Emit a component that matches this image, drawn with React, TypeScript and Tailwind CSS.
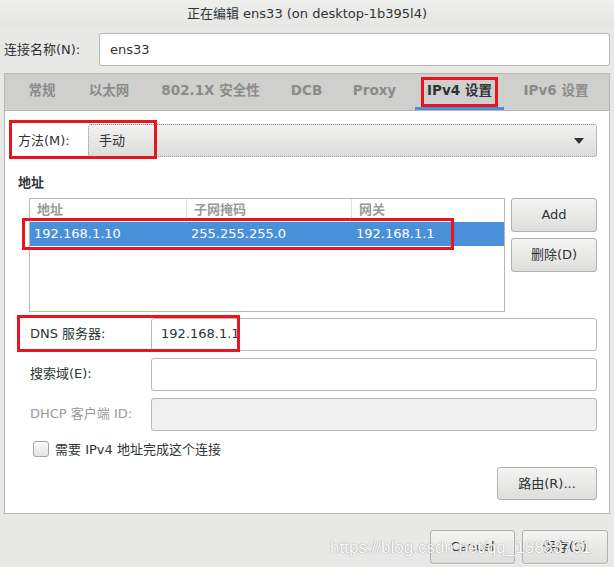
import React from "react";

const FONT = { fontFamily: '"DejaVu Sans", "Noto Sans CJK SC", sans-serif' };

function Btn({ children, className = "" }: { children: React.ReactNode; className?: string }) {
  return (
    <div
      className={
        "flex items-center justify-center rounded-[3px] border border-[#b0b0ae] bg-gradient-to-b from-[#f4f4f3] to-[#dededd] text-[13px] text-[#2e3436] shadow-[0_1px_0_rgba(255,255,255,0.6)] " +
        className
      }
    >
      {children}
    </div>
  );
}

function Field({ value = "", disabled = false }: { value?: string; disabled?: boolean }) {
  return (
    <div
      className={
        "flex h-[33px] flex-1 items-center rounded-[3px] border border-[#b8b8b6] px-[9px] text-[13px] text-[#2e3436] " +
        (disabled ? "bg-[#f0f0f0]" : "bg-white")
      }
    >
      {value}
    </div>
  );
}

const tabs: { t: string; w: string }[] = [
  { t: "常规", w: "w-[60px]" },
  { t: "以太网", w: "w-[74px]" },
  { t: "802.1X 安全性", w: "w-[129px]" },
  { t: "DCB", w: "w-[63px]" },
  { t: "Proxy", w: "w-[73px]" },
  { t: "IPv4 设置", w: "w-[97px]" },
  { t: "IPv6 设置", w: "w-[96px]" },
];

export default function App() {
  return (
    <div
      className="relative flex h-[567px] w-[614px] flex-col overflow-hidden bg-[#e8e8e7] text-[#2e3436]"
      style={FONT}
    >
      {/* title bar */}
      <div className="flex h-[28px] items-center justify-center bg-gradient-to-b from-[#eeeeed] to-[#e6e6e5] text-[13px] text-[#2e3436]">
        正在编辑 ens33 (on desktop-1b395l4)
      </div>

      {/* name row */}
      <div className="mt-[5px] flex items-center pl-[4px] pr-[4px]">
        <div className="w-[95px] text-[13px]">连接名称(N):</div>
        <div className="flex h-[33px] flex-1 items-center rounded-[3px] border border-[#b8b8b6] bg-white pl-[10px] text-[13px]">
          ens33
        </div>
      </div>

      {/* notebook */}
      <div className="ml-[4px] mt-[7px] flex h-[441px] w-[606px] flex-col border border-[#b6b6b3] bg-white">
        <div className="flex h-[37px] items-stretch border-b border-[#b6b6b3] bg-[#cfcfce] pl-[7px]">
          {tabs.map(({ t, w }) => {
            const active = t === "IPv4 设置";
            return (
              <div key={t} className={"flex flex-col " + w}>
                <div
                  className={
                    "flex flex-1 items-center justify-center whitespace-nowrap text-[13.5px] font-bold " +
                    (active ? "text-[#2e3436]" : "text-[#8b8b8a]")
                  }
                >
                  {t}
                </div>
                <div className={"mx-[4px] h-[3px] " + (active ? "bg-[#4a90d9]" : "")} />
              </div>
            );
          })}
        </div>

        <div className="flex flex-1 flex-col pl-[13px] pr-[12px] pt-[13px]">
          {/* method */}
          <div className="flex items-center">
            <div className="w-[70px] text-[13px]">方法(M):</div>
            <div className="flex h-[33px] flex-1 items-center justify-between rounded-[3px] border border-dotted border-[#8e8e8d] bg-gradient-to-b from-[#f2f2f1] to-[#dcdcdb] pl-[10px] pr-[12px] text-[13px]">
              <span>手动</span>
              <svg width="10" height="6" viewBox="0 0 10 6">
                <path d="M0 0 L10 0 L5 6 Z" fill="#2e3436" />
              </svg>
            </div>
          </div>

          <div className="mt-[16px] text-[13px] font-bold">地址</div>

          <div className="mt-[5px] flex pl-[11px]">
            <div className="flex h-[114px] w-[477px] flex-col border border-[#b6b6b3] bg-white">
              <div className="flex h-[23px] text-[13px] font-bold text-[#9a9a99]">
                <div className="flex w-[157px] items-center border-r border-[#e2e2e1] pl-[7px]">地址</div>
                <div className="flex w-[165px] items-center border-r border-[#e2e2e1] pl-[7px]">子网掩码</div>
                <div className="flex flex-1 items-center pl-[7px]">网关</div>
              </div>
              <div className="flex h-[24px] bg-[#4a90d9] text-[13px] text-white">
                <div className="flex w-[157px] items-center pl-[4px]">192.168.1.10</div>
                <div className="flex w-[165px] items-center pl-[4px]">255.255.255.0</div>
                <div className="flex flex-1 items-center pl-[4px]">192.168.1.1</div>
              </div>
            </div>
            <div className="ml-[6px] flex flex-col gap-[6px]">
              <Btn className="h-[34px] w-[86px]">Add</Btn>
              <Btn className="h-[34px] w-[86px]">删除(D)</Btn>
            </div>
          </div>

          <div className="mt-[6px] flex flex-col gap-[7px] pl-[12px]">
            <div className="flex items-center">
              <div className="w-[121px] text-[13px]">DNS 服务器:</div>
              <Field value="192.168.1.1" />
            </div>
            <div className="flex items-center">
              <div className="w-[121px] text-[13px]">搜索域(E):</div>
              <Field />
            </div>
            <div className="flex items-center">
              <div className="w-[121px] text-[13px] text-[#9a9a99]">DHCP 客户端 ID:</div>
              <Field disabled />
            </div>
          </div>

          <div className="mt-[9px] flex items-center pl-[15px]">
            <div className="h-[16px] w-[16px] rounded-[3px] border border-[#a5a5a4] bg-gradient-to-b from-[#fafafa] to-[#e4e4e3]" />
            <div className="ml-[6px] text-[13px]">需要 IPv4 地址完成这个连接</div>
          </div>

          <div className="mt-[8px] flex justify-end">
            <Btn className="h-[33px] w-[100px]">路由(R)...</Btn>
          </div>
        </div>
      </div>

      {/* bottom buttons */}
      <div className="mt-[16px] flex justify-end gap-[7px] pr-[6px]">
        <Btn className="h-[34px] w-[85px]">Cancel</Btn>
        <Btn className="h-[34px] w-[86px]">保存(S)</Btn>
      </div>

      {/* annotation boxes (overlays) */}
      <div className="pointer-events-none absolute left-[421px] top-[77px] h-[30px] w-[77px] border-[3px] border-[#e8141f]" />
      <div className="pointer-events-none absolute left-[9px] top-[120px] h-[39px] w-[148px] border-[3px] border-[#e8141f]" />
      <div className="pointer-events-none absolute left-[22px] top-[218px] h-[32px] w-[432px] border-[3px] border-[#e8141f]" />
      <div className="pointer-events-none absolute left-[17px] top-[315px] h-[37px] w-[223px] border-[3px] border-[#e8141f]" />

      {/* watermark */}
      <div
        className="pointer-events-none absolute left-[330px] top-[535px] text-[17px] text-white"
        style={{
          fontFamily: '"Liberation Sans", sans-serif',
          textShadow: "0 0 1px #9a9a9a, 0 0 1px #9a9a9a",
          opacity: 0.9,
        }}
      >
        https://blog.csdn.net/qq_18883761
      </div>
    </div>
  );
}
